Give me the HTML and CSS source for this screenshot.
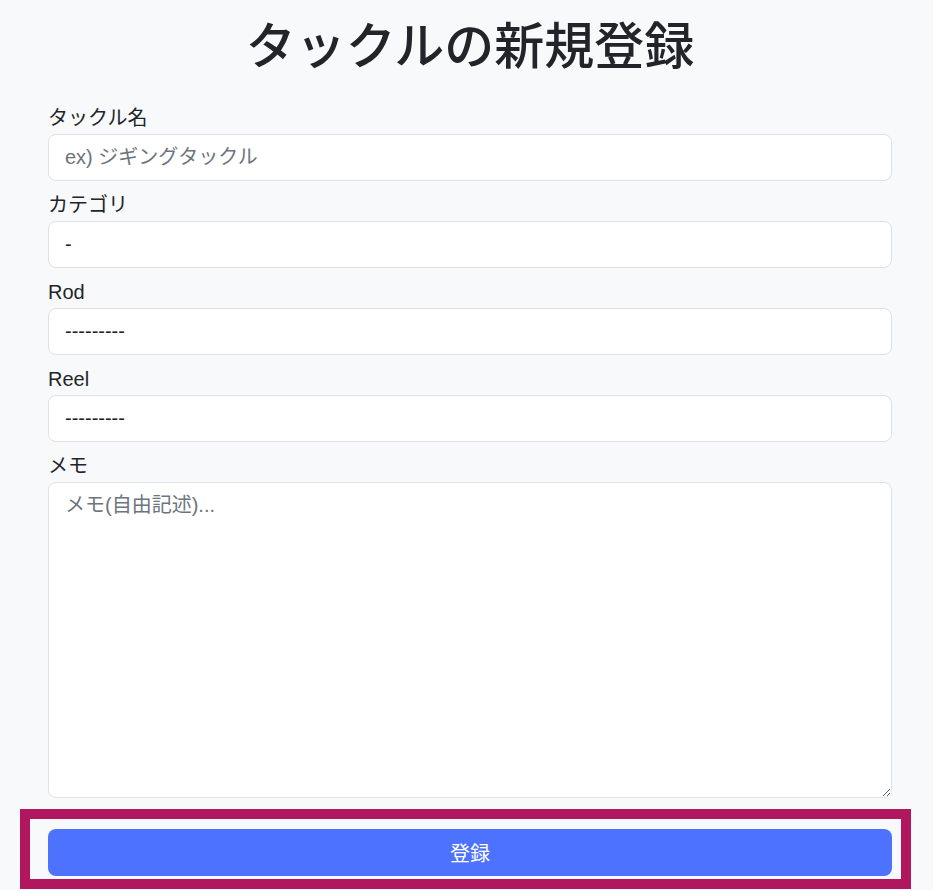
FILE: index.html
```html
<!DOCTYPE html>
<html lang="ja">
<head>
  <meta charset="UTF-8" />
  <meta name="viewport" content="width=device-width, initial-scale=1" />
  <title>タックルの新規登録</title>
  <link rel="stylesheet" href="styles.css">
</head>
<body>
  <div class="container">
    <h1 class="page-title">タックルの新規登録</h1>

    <form class="tackle-form">
      <div class="field">
        <label for="name">タックル名</label>
        <input id="name" type="text" class="form-control" placeholder="ex) ジギングタックル">
      </div>
      <div class="field">
        <label for="category">カテゴリ</label>
        <select id="category" class="form-control">
          <option>-</option>
        </select>
      </div>
      <div class="field">
        <label for="rod">Rod</label>
        <select id="rod" class="form-control">
          <option>---------</option>
        </select>
      </div>
      <div class="field">
        <label for="reel">Reel</label>
        <select id="reel" class="form-control">
          <option>---------</option>
        </select>
      </div>
      <div class="field">
        <label for="memo">メモ</label>
        <textarea id="memo" class="form-control memo" placeholder="メモ(自由記述)..."></textarea>
      </div>

      <!-- submit area (highlighted) -->
      <div class="submit-row">
        <button type="submit" class="submit-btn">登録</button>
      </div>
    </form>
  </div>
</body>
</html>
```

FILE: styles.css
```css
* {
  box-sizing: border-box;
  margin: 0;
  padding: 0;
}

html, body {
  background-color: #f8f9fa;
  color: #212529;
  font-family: "Liberation Sans", "Noto Sans CJK JP", sans-serif;
}

.container {
  width: 844px;
  margin-left: 48px;
  padding-top: 12px;
}

.page-title {
  font-family: "Noto Sans CJK JP", sans-serif;
  font-size: 50px;
  font-weight: 500;
  line-height: 60px;
  text-align: center;
  margin-bottom: 33px;
}

.field {
  margin-bottom: 11px;
}

.field label {
  display: block;
  font-size: 20px;
  line-height: 27px;
  margin-bottom: 2px;
}

.form-control {
  display: block;
  width: 100%;
  height: 47px;
  padding: 8px 16px;
  font-family: inherit;
  font-size: 20px;
  line-height: 29px;
  color: #212529;
  background: #fff;
  border: 1px solid #dee2e6;
  border-radius: 8px;
  appearance: none;
  -webkit-appearance: none;
  outline: none;
}

.form-control::placeholder {
  color: #6c757d;
}

.memo {
  height: 316px;
  resize: vertical;
}

.submit-row {
  margin-left: -28px;
  width: 891px;
  border: 10px solid #b1175f;
  padding: 10px 9px 3px 18px;
}

.submit-btn {
  display: block;
  width: 100%;
  height: 47px;
  background-color: #4d72fe;
  color: #fff;
  border: none;
  border-radius: 8px;
  font-family: "Noto Sans CJK JP", sans-serif;
  font-size: 20px;
  cursor: pointer;
}
```
